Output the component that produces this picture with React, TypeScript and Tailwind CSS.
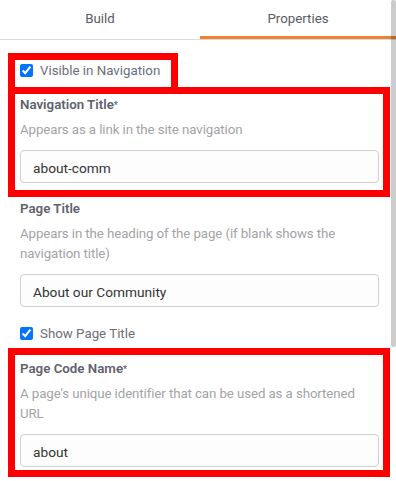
import React from "react";

function Check({ label }: { label: string }) {
  return (
    <label className="flex items-center h-[20px] gap-[7px]">
      <input type="checkbox" defaultChecked className="m-0 w-[13px] h-[13px]" />
      <span className="text-[#6b6e78] pt-[1px]">{label}</span>
    </label>
  );
}

function Field({
  title,
  desc,
  value,
  required,
  className = "",
}: {
  title: string;
  desc: string;
  value: string;
  required?: boolean;
  className?: string;
}) {
  return (
    <div className={"flex flex-col " + className}>
      <div className="h-[20px] font-semibold text-[#5e616c]">
        {title}
        {required && <sup className="text-[9px] relative -top-[1px]">*</sup>}
      </div>
      <div className="mt-[5px] text-[#a3a3a6] tracking-[-0.1px]">{desc}</div>
      <div className="mt-[10px] h-[33px] border border-[#d0d0d0] rounded-[4px] bg-[#fdfdfd] flex items-center px-[12px] pt-[2px] text-[#333] text-[13.7px]">
        {value}
      </div>
    </div>
  );
}

export default function App() {
  return (
    <div
      className="relative w-[396px] h-[481px] overflow-hidden bg-white text-[13.3px] leading-[20px]"
      style={{ fontFamily: "Roboto, 'Noto Sans', sans-serif" }}
    >
      <div className="flex h-[40px] border-b border-[#dadada]">
        <div className="w-[200px] flex items-center justify-center text-[#585b64] pb-[2px]">Build</div>
        <div className="flex-1 flex items-center justify-center text-[#585b64] border-b-[3px] border-[#ee8233] pt-[1px]">
          Properties
        </div>
      </div>
      <div className="pl-[20px] pr-[17px] pt-[20px] flex flex-col">
        <Check label="Visible in Navigation" />
        <Field
          className="mt-[15px]"
          title="Navigation Title"
          required
          desc="Appears as a link in the site navigation"
          value="about-comm"
        />
        <Field
          className="mt-[16px]"
          title="Page Title"
          desc="Appears in the heading of the page (if blank shows the navigation title)"
          value="About our Community"
        />
        <div className="mt-[16px]">
          <Check label="Show Page Title" />
        </div>
        <Field
          className="mt-[16px]"
          title="Page Code Name"
          required
          desc="A page's unique identifier that can be used as a shortened URL"
          value="about"
        />
      </div>

      {/* highlight boxes */}
      <div className="absolute left-[8px] top-[53px] w-[170px] h-[41px] border-[7px] border-[#ff0000]" />
      <div className="absolute left-[8px] top-[87px] w-[382px] h-[110px] border-[7px] border-[#ff0000]" />
      <div className="absolute left-[8px] top-[348px] w-[382px] h-[129px] border-[7px] border-[#ff0000]" />

      {/* scrollbar */}
      <div className="absolute right-0 top-0 w-[5px] h-[347px] bg-black/20 rounded-[2px]" />
    </div>
  );
}
